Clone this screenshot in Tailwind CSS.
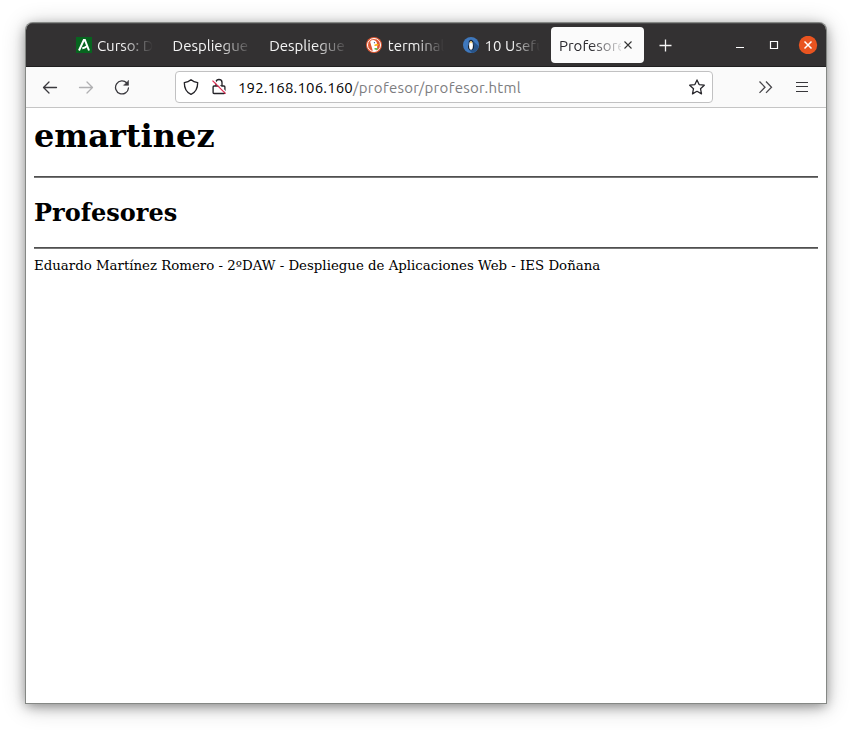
<!DOCTYPE html>
<html lang="es">
<head>
<meta charset="utf-8">
<title>Profesores</title>
<script src="https://cdn.jsdelivr.net/npm/@tailwindcss/browser@4"></script>
</head>
<body class="h-[732px] w-[852px] overflow-hidden bg-white pl-[26px] pt-[23px]">
<div class="flex h-[680px] w-[800px] flex-col overflow-hidden rounded-t-[7px] bg-white font-['Ubuntu','Noto_Sans',sans-serif] shadow-[0_0_0_1px_#858885,0_3px_12px_rgba(0,0,0,0.38),0_3px_24px_rgba(0,0,0,0.24)]">
  <header class="flex h-11 shrink-0 border-b border-[#201f20] border-t border-t-[#494849] bg-[#333132] pl-[42px] pt-[3px] text-[15px] text-[#f4f4f4]">
    <div class="flex h-9 w-[96.6px] items-center px-2">
      <svg class="mr-[5px] h-4 w-4 shrink-0" viewBox="0 0 16 16"><path fill="#07651f" d="M0 0h16v16H0z"/><path d="M3 13.500 7.800 3h1.100L13 13.500M6.300 11.300c1.800-.2 3.200-.9 4.200-1.900" fill="none" stroke="#fff" stroke-width="2"/></svg>
      <span class="w-[56px] overflow-hidden whitespace-nowrap pt-[2px] [mask-image:linear-gradient(to_right,black_45%,transparent)]">Curso: De</span>
    </div>
    <div class="flex h-9 w-[96.6px] items-center pl-[8px] pr-3"><span class="w-[76px] overflow-hidden whitespace-nowrap pt-[2px] [mask-image:linear-gradient(to_right,black_60%,transparent_105%)]">Despliegue</span></div>
    <div class="flex h-9 w-[96.6px] items-center pl-[8px] pr-3"><span class="w-[76px] overflow-hidden whitespace-nowrap pt-[2px] [mask-image:linear-gradient(to_right,black_60%,transparent_105%)]">Despliegue</span></div>
    <div class="flex h-9 w-[96.6px] items-center px-2">
      <svg class="mr-[6px] h-4 w-4 shrink-0" viewBox="0 0 16 16"><circle cx="8" cy="8" r="8" fill="#de5833"/><circle cx="8" cy="8" r="6.500" fill="none" stroke="#fff" stroke-width="1"/><path d="M4.200 5c0-2.800 5.900-2.900 6.500.5l.5 3-.1 4.800c-1.400 1-3 1-4.300.5z" fill="#fff"/><path d="M8.800 7.500c2-.9 4.500-.5 3.700.4-.6.8-2.300.8-3.500 1.200-.9-.1-1-1.200-.2-1.600z" fill="#fdb515"/><path d="m8.500 11 3.200.2-.6 1.800-2.500-.4z" fill="#55b847"/><circle cx="8.400" cy="5.700" r=".6" fill="#2d4f8e"/></svg>
      <span class="w-[56px] shrink-0 overflow-hidden whitespace-nowrap pt-[2px] [mask-image:linear-gradient(to_right,black_50%,transparent)]">terminal</span>
    </div>
    <div class="flex h-9 w-[96.6px] items-center pl-[9px]">
      <svg class="mr-[5px] h-4 w-4 shrink-0" viewBox="0 0 16 16"><circle cx="8" cy="8" r="8" fill="#3f78bd"/><path d="m10 4 5.500 5A8 8 0 0 1 9 16l-3-3z" fill="#285489"/><path d="M5.700 5.200C5.700 1.800 10.300 1.800 10.300 5.200v2.300c1.700 3 .3 5.600-2.300 5.600s-4-2.600-2.300-5.600z" fill="#172333"/><ellipse cx="8" cy="8.500" rx="1.900" ry="4.300" fill="#fff"/><path d="m6.800 5 1.200-.8 1.200.8L8 6.500z" fill="#f8c34c"/></svg>
      <span class="w-[56px] overflow-hidden whitespace-nowrap pt-[2px] tracking-[0.1px] [mask-image:linear-gradient(to_right,black_50%,transparent)]">10 Useful</span>
    </div>
    <div class="flex h-9 w-[93px] items-center rounded bg-[#fbfbfb] pl-2 text-[#29282d]">
      <span class="w-[62px] overflow-hidden whitespace-nowrap pt-[2px] [mask-image:linear-gradient(to_right,black_50%,transparent_108%)]">Profesores</span>
      <svg class="ml-[2px] h-[10px] w-[10px]" viewBox="0 0 10 10"><path d="m1.500 1.500 7 7m0-7-7 7" stroke="#333" stroke-width="1.100"/></svg>
    </div>
    <div class="ml-[15px] flex h-9 items-center">
      <svg class="h-[14px] w-[14px]" viewBox="0 0 14 14"><path d="M.5 7.500h12M6.500 1.500v12" stroke="#f4f4f4" stroke-width="1.300"/></svg>
    </div>
    <div class="ml-[62px] flex h-9 items-center">
      <svg class="h-[18px] w-[84px]" viewBox="0 0 84 18"><path d="M1 11.500h8" stroke="#fff"/><path d="M35.500 5.500h7v7h-7z" fill="none" stroke="#fff" stroke-width="1.200"/><circle cx="73" cy="9" r="9.200" fill="#e95420"/><path d="m69.500 5.500 7 7m0-7-7 7" stroke="#fff" stroke-width="1.500"/></svg>
    </div>
  </header>
  <nav class="flex h-[41px] shrink-0 items-center border-b border-[#c5c5c5] bg-[#fafafa]">
    <svg class="ml-4 h-4 w-4" viewBox="0 0 16 16" fill="none" stroke="#3a393e" stroke-width="1.300" stroke-linecap="round" stroke-linejoin="round"><path d="M14.500 8.500h-13m5.500-5.500-5.500 5.500L7 14"/></svg>
    <svg class="ml-5 h-4 w-4" viewBox="0 0 16 16" fill="none" stroke="#b0b0b2" stroke-width="1.300" stroke-linecap="round" stroke-linejoin="round"><path d="M1.500 8.500h13M9 3l5.500 5.500L9 14"/></svg>
    <svg class="ml-5 h-4 w-4" viewBox="0 0 16 16" fill="none" stroke="#3a393e" stroke-width="1.300" stroke-linecap="round"><path d="M12.800 4a6.500 6.500 0 1 0 1.700 5"/><path d="M14.500 1.700v4.600H9.900z" fill="#3a393e" stroke-width=".6" stroke-linejoin="round"/></svg>
    <div class="ml-[45px] flex h-8 w-[538px] items-center rounded border border-[#c1c1c2] bg-white">
      <svg class="ml-[7px] h-4 w-4" viewBox="0 0 16 16" fill="none" stroke="#242328" stroke-width="1.350" stroke-linejoin="round"><path d="M8 .8C6 2.500 3.500 3.300 1.300 3.600c0 5.500 1.500 9.700 6.700 11.800 5.200-2.100 6.700-6.300 6.700-11.800C12.500 3.300 10 2.500 8 .8z"/></svg>
      <svg class="ml-3 h-[18px] w-4" viewBox="0 0 16 18"><path d="M5 8V4.500a3 3 0 0 1 6 0V8M3 8h10q.9 0 .9.900v5.700q0 .9-.9.900H3q-.9 0-.9-.9V8.900q0-.9.900-.9z" fill="none" stroke="#242328" stroke-width="1.350"/><path d="m2.700 2 12.500 12.500" stroke="#fff" stroke-width="1.400"/><path d="m1.500 2.700 13 13" stroke="#e22850" stroke-width="1.200"/></svg>
      <div class="ml-[11px] w-[451px] whitespace-nowrap pt-px text-[15px] leading-5 text-[#7d7d80]"><span class="tracking-[0.16px] text-black">192.168.106.160</span><span class="tracking-[0.3px]">/profesor/profesor.html</span></div>
      <svg class="h-4 w-4 shrink-0" viewBox="0 0 16 16" fill="none" stroke="#29282d" stroke-width="1.300" stroke-linejoin="round"><path d="m8 .9 2.100 4.700 5.200.6-3.800 3.500 1 5.200L8 12.300l-4.500 2.600 1-5.200L.7 6.200l5.200-.6z"/></svg>
    </div>
    <svg class="ml-[45px] h-4 w-4" viewBox="0 0 16 16" fill="none" stroke="#48474b" stroke-width="1.300"><path d="m1.500 2.500 5.500 5.700-5.500 5.700M8 2.500l5.500 5.700L8 13.900"/></svg>
    <svg class="ml-5 h-4 w-4" viewBox="0 0 16 16" stroke="#38373b" stroke-width="1.200"><path d="M2 3.500h12M2 7.500h12M2 12.500h12"/></svg>
  </nav>
  <main class="px-2 pt-2 font-['DejaVu_Serif',serif] text-black">
    <h1 class="h-10 text-[32px] font-bold leading-[40px]">emartinez</h1>
    <hr class="mt-5 h-[2px] border-x-0 border-b border-t border-b-[#777] border-t-[#505050]">
    <h2 class="mt-5 h-[29px] text-2xl font-bold leading-[29px]">Profesores</h2>
    <hr class="mt-5 h-[2px] border-x-0 border-b border-t border-b-[#777] border-t-[#505050]">
    <p class="mt-[7px] text-[13.333px] leading-[19px]">Eduardo Martínez Romero - 2ºDAW - Despliegue de Aplicaciones Web - IES Doñana</p>
  </main>
</div>
</body>
</html>
